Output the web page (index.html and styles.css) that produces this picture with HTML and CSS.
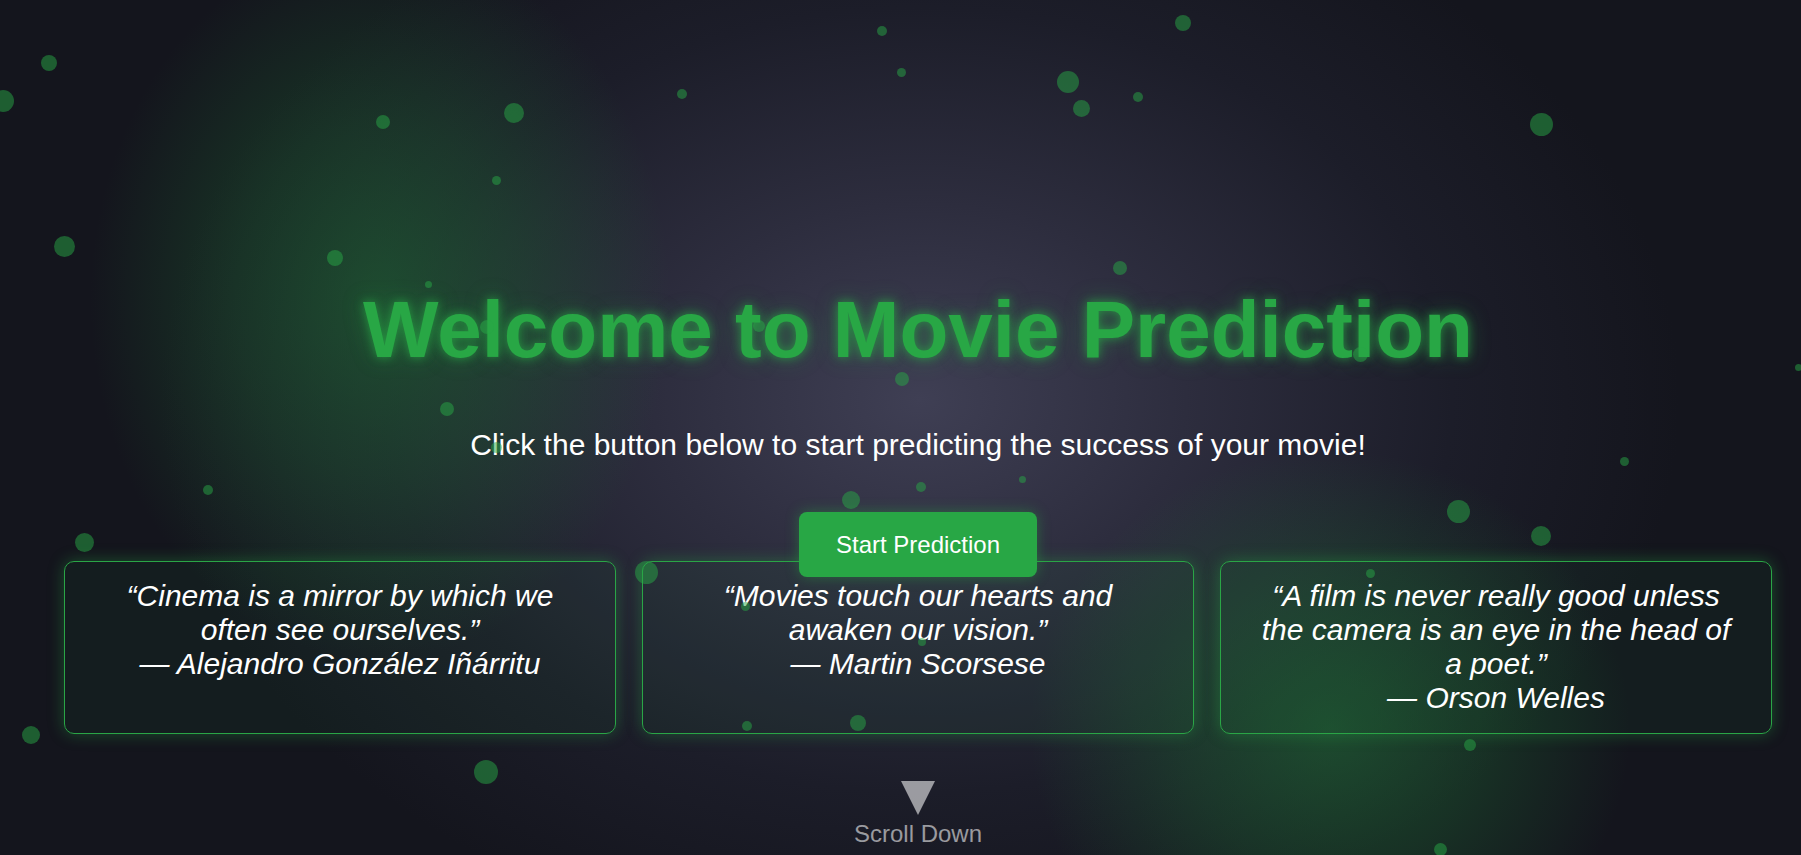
FILE: index.html
```html
<!DOCTYPE html>
<html lang="en">
<head>
<meta charset="utf-8">
<title>Movie Prediction</title>
<link rel="stylesheet" href="styles.css">
</head>
<body>
<div class="backdrop" aria-hidden="true">
  <div class="glow glow-green-left"></div>
  <div class="glow glow-green-right"></div>
</div>
<main class="hero">
  <h1 class="title">Welcome to Movie Prediction</h1>
  <p class="subtitle">Click the button below to start predicting the success of your movie!</p>
  <button class="cta" type="button">Start Prediction</button>
  <section class="quotes">
    <blockquote class="quote">“Cinema is a mirror by which we often see ourselves.”<br>— Alejandro González Iñárritu</blockquote>
    <blockquote class="quote">“Movies touch our hearts and awaken our vision.”<br>— Martin Scorsese</blockquote>
    <blockquote class="quote">“A film is never really good unless the camera is an eye in the head of a poet.”<br>— Orson Welles</blockquote>
  </section>
  <div class="scroll-hint">
    <span class="scroll-arrow"></span>
    <span class="scroll-label">Scroll Down</span>
  </div>
</main>
<div class="particles" aria-hidden="true">
  <span class="dot" style="left:41px;top:55px;width:16px;height:16px"></span>
  <span class="dot" style="left:-8px;top:90px;width:22px;height:22px"></span>
  <span class="dot" style="left:376px;top:115px;width:14px;height:14px"></span>
  <span class="dot" style="left:504px;top:103px;width:20px;height:20px"></span>
  <span class="dot" style="left:492px;top:176px;width:9px;height:9px"></span>
  <span class="dot" style="left:677px;top:89px;width:10px;height:10px"></span>
  <span class="dot" style="left:877px;top:26px;width:10px;height:10px"></span>
  <span class="dot" style="left:897px;top:68px;width:9px;height:9px"></span>
  <span class="dot" style="left:1175px;top:15px;width:16px;height:16px"></span>
  <span class="dot" style="left:1057px;top:71px;width:22px;height:22px"></span>
  <span class="dot" style="left:1073px;top:100px;width:17px;height:17px"></span>
  <span class="dot" style="left:1133px;top:92px;width:10px;height:10px"></span>
  <span class="dot" style="left:1530px;top:113px;width:23px;height:23px"></span>
  <span class="dot" style="left:54px;top:236px;width:21px;height:21px"></span>
  <span class="dot" style="left:327px;top:250px;width:16px;height:16px"></span>
  <span class="dot" style="left:425px;top:281px;width:7px;height:7px"></span>
  <span class="dot" style="left:1113px;top:261px;width:14px;height:14px"></span>
  <span class="dot" style="left:895px;top:372px;width:14px;height:14px"></span>
  <span class="dot" style="left:440px;top:402px;width:14px;height:14px"></span>
  <span class="dot" style="left:491px;top:442px;width:11px;height:11px"></span>
  <span class="dot" style="left:1353px;top:347px;width:15px;height:15px"></span>
  <span class="dot" style="left:480px;top:320px;width:14px;height:14px"></span>
  <span class="dot" style="left:753px;top:320px;width:12px;height:12px"></span>
  <span class="dot" style="left:203px;top:485px;width:10px;height:10px"></span>
  <span class="dot" style="left:75px;top:533px;width:19px;height:19px"></span>
  <span class="dot" style="left:842px;top:491px;width:18px;height:18px"></span>
  <span class="dot" style="left:916px;top:482px;width:10px;height:10px"></span>
  <span class="dot" style="left:1019px;top:476px;width:7px;height:7px"></span>
  <span class="dot" style="left:1620px;top:457px;width:9px;height:9px"></span>
  <span class="dot" style="left:1447px;top:500px;width:23px;height:23px"></span>
  <span class="dot" style="left:1531px;top:526px;width:20px;height:20px"></span>
  <span class="dot" style="left:1795px;top:364px;width:7px;height:7px"></span>
  <span class="dot" style="left:635px;top:561px;width:23px;height:23px"></span>
  <span class="dot" style="left:1366px;top:569px;width:9px;height:9px"></span>
  <span class="dot" style="left:22px;top:726px;width:18px;height:18px"></span>
  <span class="dot" style="left:474px;top:760px;width:24px;height:24px"></span>
  <span class="dot" style="left:742px;top:721px;width:10px;height:10px"></span>
  <span class="dot" style="left:850px;top:715px;width:16px;height:16px"></span>
  <span class="dot" style="left:1464px;top:739px;width:12px;height:12px"></span>
  <span class="dot" style="left:1434px;top:843px;width:13px;height:13px"></span>
  <span class="dot" style="left:741px;top:602px;width:9px;height:9px"></span>
  <span class="dot" style="left:918px;top:638px;width:8px;height:8px"></span>
</div>
</body>
</html>
```

FILE: styles.css
```css
html, body {
  margin: 0;
  padding: 0;
  height: 855px;
}

body {
  position: relative;
  overflow: hidden;
  font-family: "Liberation Sans", Arial, sans-serif;
  color: #ffffff;
  background-color: #14151d;
  background-image: radial-gradient(ellipse 760px 560px at 920px 400px, #3f3f54 0%, #2d2d3e 35%, #1c1d29 70%, #14151d 100%);
}

.backdrop,
.particles {
  position: absolute;
  inset: 0;
  overflow: hidden;
  pointer-events: none;
}

.backdrop {
  z-index: 0;
}

.particles {
  z-index: 5;
}

.glow {
  position: absolute;
  border-radius: 50%;
}

.glow-green-left {
  left: 90px;
  top: -60px;
  width: 580px;
  height: 720px;
  background: radial-gradient(closest-side, rgba(32, 115, 55, 0.55) 0%, rgba(32, 115, 55, 0.3) 50%, rgba(32, 115, 55, 0) 100%);
}

.glow-green-right {
  left: 1030px;
  top: 450px;
  width: 600px;
  height: 560px;
  background: radial-gradient(closest-side, rgba(32, 115, 55, 0.55) 0%, rgba(32, 115, 55, 0.3) 50%, rgba(32, 115, 55, 0) 100%);
}

.hero {
  position: relative;
  z-index: 1;
  box-sizing: border-box;
  height: 855px;
  padding: 284px 29px 0 64px;
  display: flex;
  flex-direction: column;
  align-items: center;
}

.title {
  margin: 0;
  font-size: 80px;
  font-weight: 700;
  line-height: normal;
  color: #28a745;
  text-shadow: 0 0 10px rgba(40, 167, 69, 0.75), 0 0 22px rgba(40, 167, 69, 0.45);
}

.subtitle {
  margin: 52px 0 0;
  font-size: 30px;
  line-height: normal;
  color: #ffffff;
}

.cta {
  position: relative;
  z-index: 2;
  margin-top: 50px;
  height: 65px;
  padding: 0 37px;
  border: 0;
  border-radius: 8px;
  background: #28a745;
  color: #ffffff;
  font-family: "Liberation Sans", Arial, sans-serif;
  font-size: 24px;
  box-shadow: 0 0 14px rgba(40, 167, 69, 0.45);
  cursor: pointer;
}

.quotes {
  position: relative;
  z-index: 1;
  display: flex;
  gap: 26px;
  width: 100%;
  margin-top: -16px;
}

.quote {
  flex: 1;
  margin: 0;
  padding: 17px 30px 18px;
  border: 1px solid #2aa546;
  border-radius: 10px;
  background: rgba(40, 167, 69, 0.06);
  box-shadow: 0 0 16px rgba(40, 167, 69, 0.4);
  font-size: 30px;
  font-style: italic;
  line-height: normal;
  text-align: center;
  color: #ffffff;
}

.scroll-hint {
  margin-top: 47px;
  display: flex;
  flex-direction: column;
  align-items: center;
  gap: 5px;
  color: rgba(255, 255, 255, 0.56);
  font-size: 24px;
  line-height: normal;
}

.scroll-arrow {
  width: 0;
  height: 0;
  border-left: 17px solid transparent;
  border-right: 17px solid transparent;
  border-top: 34px solid rgba(255, 255, 255, 0.56);
}

.dot {
  position: absolute;
  border-radius: 50%;
  background: rgba(40, 167, 69, 0.5);
}
```
